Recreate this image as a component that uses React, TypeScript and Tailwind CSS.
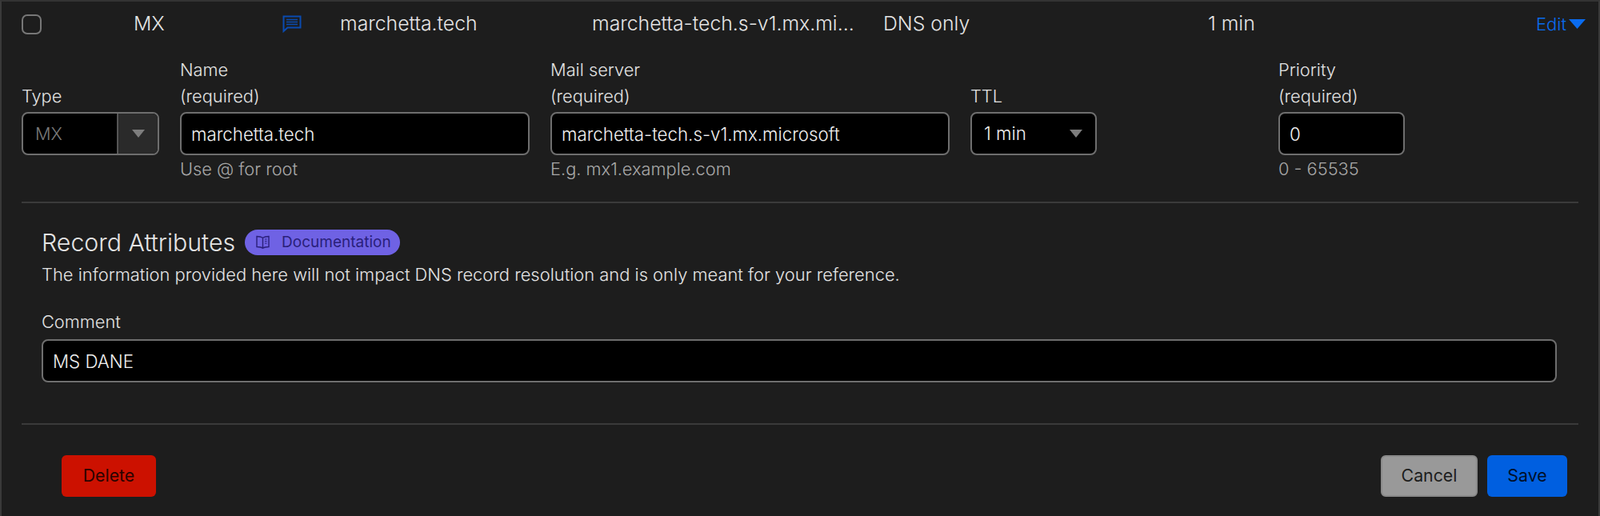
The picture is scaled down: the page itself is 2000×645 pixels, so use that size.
import React from "react";

const inputClass =
  "block w-full h-[54px] rounded-[8px] border-2 border-[#6e6e6e] bg-black px-[12px] text-[22.3px] font-light text-[#f0f0f0] outline-none";

function Caret({ className }: { className: string }) {
  return (
    <svg className={className} viewBox="0 0 16 11" fill="currentColor" preserveAspectRatio="none">
      <path d="M0 0h16L8 11z" />
    </svg>
  );
}

function Field({
  label,
  required,
  hint,
  className,
  children,
}: {
  label: string;
  required?: boolean;
  hint?: string;
  className: string;
  children: React.ReactNode;
}) {
  return (
    <div className={className}>
      <div className="flex h-[65px] flex-col justify-end text-[21.8px] font-light leading-[33px] text-[#e2e2e2]">
        <span>{label}</span>
        {required && <span>(required)</span>}
      </div>
      <div className="mt-[3px]">{children}</div>
      {hint && <div className="mt-[1px] text-[21.8px] font-light leading-[32px] text-[#a8a8a8]">{hint}</div>}
    </div>
  );
}

function CommentIcon() {
  return (
    <svg className="h-[22px] w-[24px] text-[#0a4bb0]" viewBox="0 0 24 22" fill="none" stroke="currentColor" strokeWidth="2">
      <path d="M1.5 20V1.5h21v14H6.5z" />
      <path d="M5 5.5h14M5 8.5h14M5 11.5h14" strokeWidth="1.6" />
    </svg>
  );
}

function BookIcon() {
  return (
    <svg className="h-[18px] w-[17px] text-[#2a1f7a]" viewBox="0 0 17 18" fill="none" stroke="currentColor" strokeWidth="1.4">
      <path d="M8.5 3.2C6.8 2 4 1.5 1 1.5v13c3 0 5.8.5 7.5 1.8 1.7-1.3 4.5-1.8 7.5-1.8v-13c-3 0-5.8.5-7.5 1.7zM8.5 3.2v13" />
      <path d="M11 5h2.6M11 7.5h2.6M11 10h2.6" strokeWidth="1.1" />
    </svg>
  );
}

export default function App() {
  return (
    <div className="h-[645px] w-full overflow-hidden border-x-2 border-t-2 border-x-[#3a3a3a] border-t-[#333333] bg-[#1d1d1d] font-['Inter',sans-serif] text-[#e4e4e4]">
      {/* record row */}
      <div className="flex h-[56px] items-center pl-[25px] text-[24.8px] font-light">
        <div className="h-[25px] w-[25px] rounded-[7px] border-2 border-[#777777]" />
        <span className="ml-[115px] w-[186px]">MX</span>
        <span className="w-[72px]"><CommentIcon /></span>
        <span className="w-[315px]">marchetta.tech</span>
        <span className="w-[364px] whitespace-nowrap">marchetta-tech.s-v1.mx.mi...</span>
        <span className="w-[406px]">DNS only</span>
        <span className="w-[410px]">1 min</span>
        <span className="text-[22px] text-[#0a6cf0]">Edit</span>
        <Caret className="ml-[3px] h-[12px] w-[21px] text-[#0a6cf0]" />
      </div>

      {/* fields */}
      <div className="mt-[14px] flex gap-[26px] pl-[25px]">
        <Field label="Type" className="w-[172px]">
          <div className="flex h-[54px] rounded-[8px] border-2 border-[#6e6e6e] bg-black text-[21.7px] font-light text-[#7a7a7a]">
            <span className="flex w-[119px] items-center border-r-2 border-[#555555] pl-[15px]">MX</span>
            <span className="flex flex-1 items-center justify-center rounded-r-[6px] bg-[#2a2a2a]">
              <Caret className="h-[10px] w-[16px] text-[#7d7d7d]" />
            </span>
          </div>
        </Field>
        <Field label="Name" required hint="Use @ for root" className="w-[437px]">
          <input className={inputClass} readOnly value="marchetta.tech" />
        </Field>
        <Field label="Mail server" required hint="E.g. mx1.example.com" className="w-[499px]">
          <input className={inputClass} readOnly value="marchetta-tech.s-v1.mx.microsoft" />
        </Field>
        <Field label="TTL" className="w-[158px]">
          <div className="flex h-[54px] items-center justify-between rounded-[8px] border-2 border-[#6e6e6e] bg-black pl-[15px] pr-[16px] text-[22.3px] font-light text-[#f0f0f0]">
            <span>1 min</span>
            <Caret className="h-[10px] w-[16px] text-[#7d7d7d]" />
          </div>
        </Field>
        <Field label="Priority" required hint="0 - 65535" className="ml-[201px] w-[158px]">
          <input className={inputClass} readOnly value="0" />
        </Field>
      </div>

      <div className="mx-[25px] mt-[25px] h-[2px] bg-[#3a3a3a]" />

      {/* record attributes */}
      <div className="pl-[50px] pr-[52px] pt-[31px]">
        <div className="flex items-center">
          <h2 className="text-[30.3px] font-light leading-[36px] text-[#e4e4e4]">Record Attributes</h2>
          <a className="ml-[12px] flex h-[32px] w-[194px] items-center gap-[15px] rounded-full bg-[#6f62e4] pl-[14px] text-[19px] text-[#2a1f7a]">
            <BookIcon />
            Documentation
          </a>
        </div>
        <p className="mt-[6px] text-[21.9px] font-light leading-[32px] text-[#e4e4e4]">
          The information provided here will not impact DNS record resolution and is only meant for your reference.
        </p>
        <label className="mt-[27px] block text-[21.8px] font-light leading-[32px] text-[#e2e2e2]">Comment</label>
        <input className={`${inputClass} mt-[6px]`} readOnly value="MS DANE" />
      </div>

      <div className="mx-[25px] mt-[51px] h-[2px] bg-[#3a3a3a]" />

      {/* actions */}
      <div className="mt-[38px] flex gap-[12px] pl-[75px] pr-[39px] text-[21.3px]">
        <button className="mr-auto h-[52px] w-[118px] rounded-[6px] bg-[#cc1100] text-[#2a0300]">Delete</button>
        <button className="h-[52px] w-[121px] rounded-[6px] border-2 border-[#8a8a8a] bg-[#999999] text-[#1d1d1d]">Cancel</button>
        <button className="h-[52px] w-[100px] rounded-[6px] bg-[#005fe0] text-[#00102a]">Save</button>
      </div>
    </div>
  );
}
